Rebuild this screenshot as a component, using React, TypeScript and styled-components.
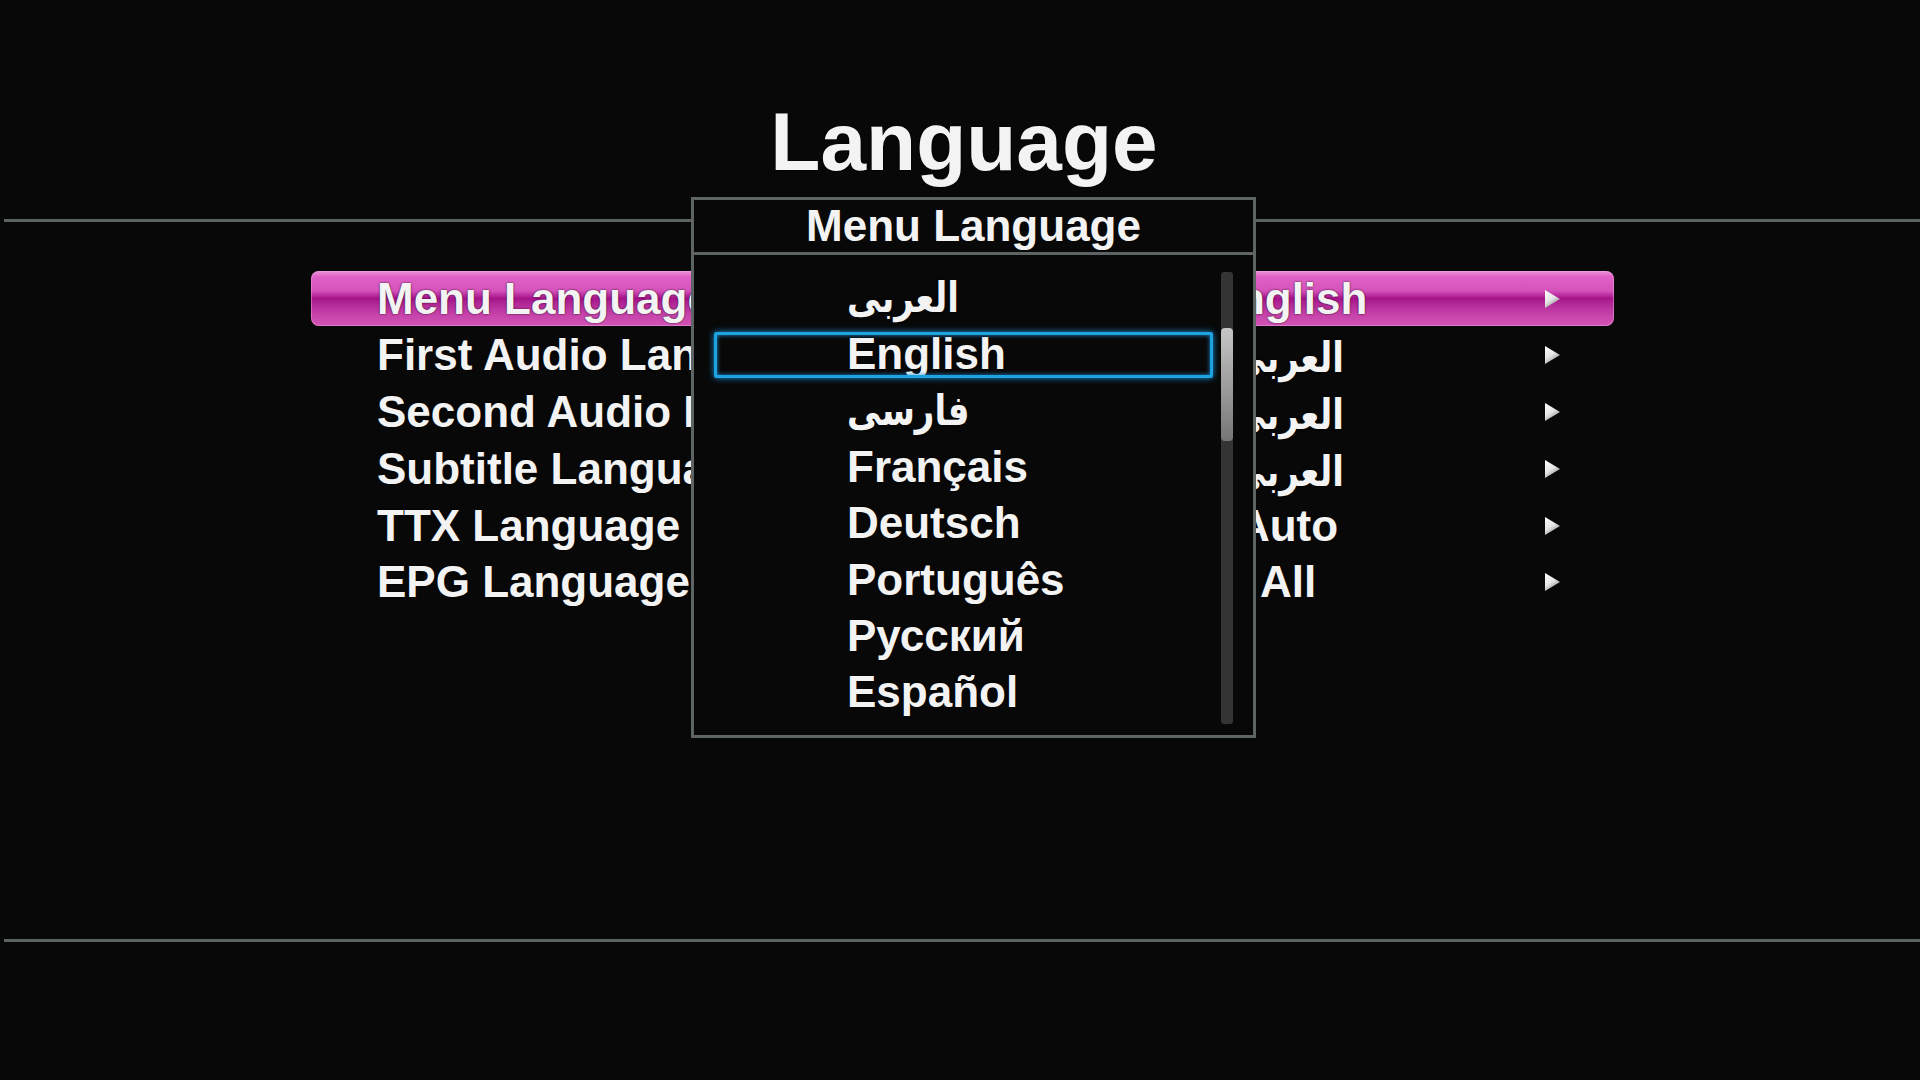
import styled, { createGlobalStyle } from "styled-components";

const GlobalStyle = createGlobalStyle`
  html, body {
    margin: 0;
    padding: 0;
    background: #080808;
  }
  body {
    font-family: "Liberation Sans", "DejaVu Sans", Arial, sans-serif;
  }
`;

interface MenuRow {
  label: string;
  value: string;
}

const rows: MenuRow[] = [
  { label: "Menu Language", value: "English" },
  { label: "First Audio Language", value: "العربی" },
  { label: "Second Audio Language", value: "العربی" },
  { label: "Subtitle Language", value: "العربی" },
  { label: "TTX Language", value: "Auto" },
  { label: "EPG Language", value: "All" },
];

const languages = [
  "العربی",
  "English",
  "فارسی",
  "Français",
  "Deutsch",
  "Português",
  "Русский",
  "Español",
];

const isArabic = (text: string) => /[\u0600-\u06ff]/.test(text);

const Screen = styled.div`
  position: relative;
  width: 1920px;
  height: 1080px;
  overflow: hidden;
  display: flex;
  flex-direction: column;
  background: #080808;
  color: #f3f3f3;
`;

const Title = styled.h1`
  margin: 0;
  padding: 101px 0 0 8px;
  font-size: 82px;
  line-height: 81px;
  font-weight: 700;
  text-align: center;
  text-shadow: 0 0 2px #000;
`;

const Divider = styled.div<{ $top?: number }>`
  margin: ${(p) => p.$top ?? 0}px 0 0 4px;
  height: 3px;
  background: #5b6363;
`;

const Content = styled.div`
  height: 717px;
  box-sizing: border-box;
  padding: 49px 0 0 311px;
`;

const MenuList = styled.div`
  width: 1303px;
  display: grid;
  row-gap: 1.8px;
`;

const Row = styled.div<{ $active?: boolean }>`
  height: 55px;
  display: grid;
  grid-template-columns: 811px 200px 157px 15px;
  align-items: center;
  padding-left: 66px;
  border-radius: 8px;
  font-size: 44px;
  font-weight: 700;
  text-shadow: 0 0 2px rgba(0, 0, 0, 0.85);
  background: ${(p) =>
    p.$active
      ? "linear-gradient(180deg, #ee94da 0%, #e062c6 10%, #d552bb 36%, #a6138a 50%, #b02595 58%, #c744aa 80%, #d254b6 100%)"
      : "transparent"};
  box-shadow: ${(p) => (p.$active ? "inset 0 0 0 1px rgba(240,160,225,0.5)" : "none")};
`;

const Label = styled.span`
  white-space: nowrap;
`;

const Value = styled.span`
  text-align: center;
  white-space: nowrap;
`;

const ArabicText = styled.span`
  display: inline-block;
  font-family: "DejaVu Sans", sans-serif;
  font-size: 34px;
  transform: scaleY(1.22);
  transform-origin: center 60%;
`;

const Arrow = ({ id }: { id: string }) => (
  <svg width="15" height="18" viewBox="0 0 15 18">
    <defs>
      <linearGradient id={id} x1="0" y1="0" x2="0.6" y2="1">
        <stop offset="0" stopColor="#ffffff" />
        <stop offset="0.55" stopColor="#e6e6e6" />
        <stop offset="1" stopColor="#8e8e8e" />
      </linearGradient>
    </defs>
    <polygon points="0,0 15,9 0,18" fill={`url(#${id})`} />
  </svg>
);

const Footer = styled.div`
  flex: 1;
`;

/* popup list that lies over the menu */
const Popup = styled.div`
  position: absolute;
  left: 691px;
  top: 197px;
  width: 565px;
  height: 541px;
  box-sizing: border-box;
  border: 3px solid #5e6464;
  background: #080808;
  display: flex;
  flex-direction: column;
`;

const PopupHeader = styled.div`
  height: 52px;
  display: flex;
  align-items: center;
  justify-content: center;
  border-bottom: 3px solid #5e6464;
  font-size: 44px;
  font-weight: 700;
`;

const PopupBody = styled.div`
  flex: 1;
  display: flex;
`;

const ItemList = styled.div`
  width: 527px;
  padding-top: 15px;
`;

const Item = styled.div<{ $selected?: boolean }>`
  position: relative;
  height: 56.3px;
  display: flex;
  align-items: center;
  padding-left: 153px;
  font-size: 44px;
  font-weight: 700;
  white-space: nowrap;
  text-shadow: 0 0 2px rgba(0, 0, 0, 0.85);

  &::before {
    content: "";
    display: ${(p) => (p.$selected ? "block" : "none")};
    position: absolute;
    left: 20px;
    right: 8px;
    top: 6px;
    bottom: 5px;
    border: 3px solid #1fa3e0;
    border-radius: 2px;
    box-shadow: 0 0 6px #1a8fd8, inset 0 0 4px #1a8fd8;
  }
`;

const ScrollTrack = styled.div`
  width: 12px;
  height: 452px;
  margin-top: 17px;
  border-radius: 3px;
  background: #343434;
  overflow: hidden;
`;

const ScrollThumb = styled.div<{ $offset: number; $size: number }>`
  margin-top: ${(p) => p.$offset}px;
  height: ${(p) => p.$size}px;
  border-radius: 4px;
  background: linear-gradient(180deg, #c6c6c6 0%, #a2a2a2 45%, #767676 100%);
`;

const LangText = ({ text }: { text: string }) =>
  isArabic(text) ? <ArabicText>{text}</ArabicText> : <>{text}</>;

export default function App() {
  return (
    <>
      <GlobalStyle />
      <Screen>
        <Title>Language</Title>
        <Divider $top={37} />
        <Content>
          <MenuList>
            {rows.map((row, i) => (
              <Row key={row.label} $active={i === 0}>
                <Label>{row.label}</Label>
                <Value>
                  <LangText text={row.value} />
                </Value>
                <span />
                <Arrow id={`arrow-${i}`} />
              </Row>
            ))}
          </MenuList>
        </Content>
        <Divider />
        <Footer />

        <Popup>
          <PopupHeader>Menu Language</PopupHeader>
          <PopupBody>
            <ItemList>
              {languages.map((lang, i) => (
                <Item key={lang + i} $selected={i === 1}>
                  <LangText text={lang} />
                </Item>
              ))}
            </ItemList>
            <ScrollTrack>
              <ScrollThumb $offset={56} $size={113} />
            </ScrollTrack>
          </PopupBody>
        </Popup>
      </Screen>
    </>
  );
}
